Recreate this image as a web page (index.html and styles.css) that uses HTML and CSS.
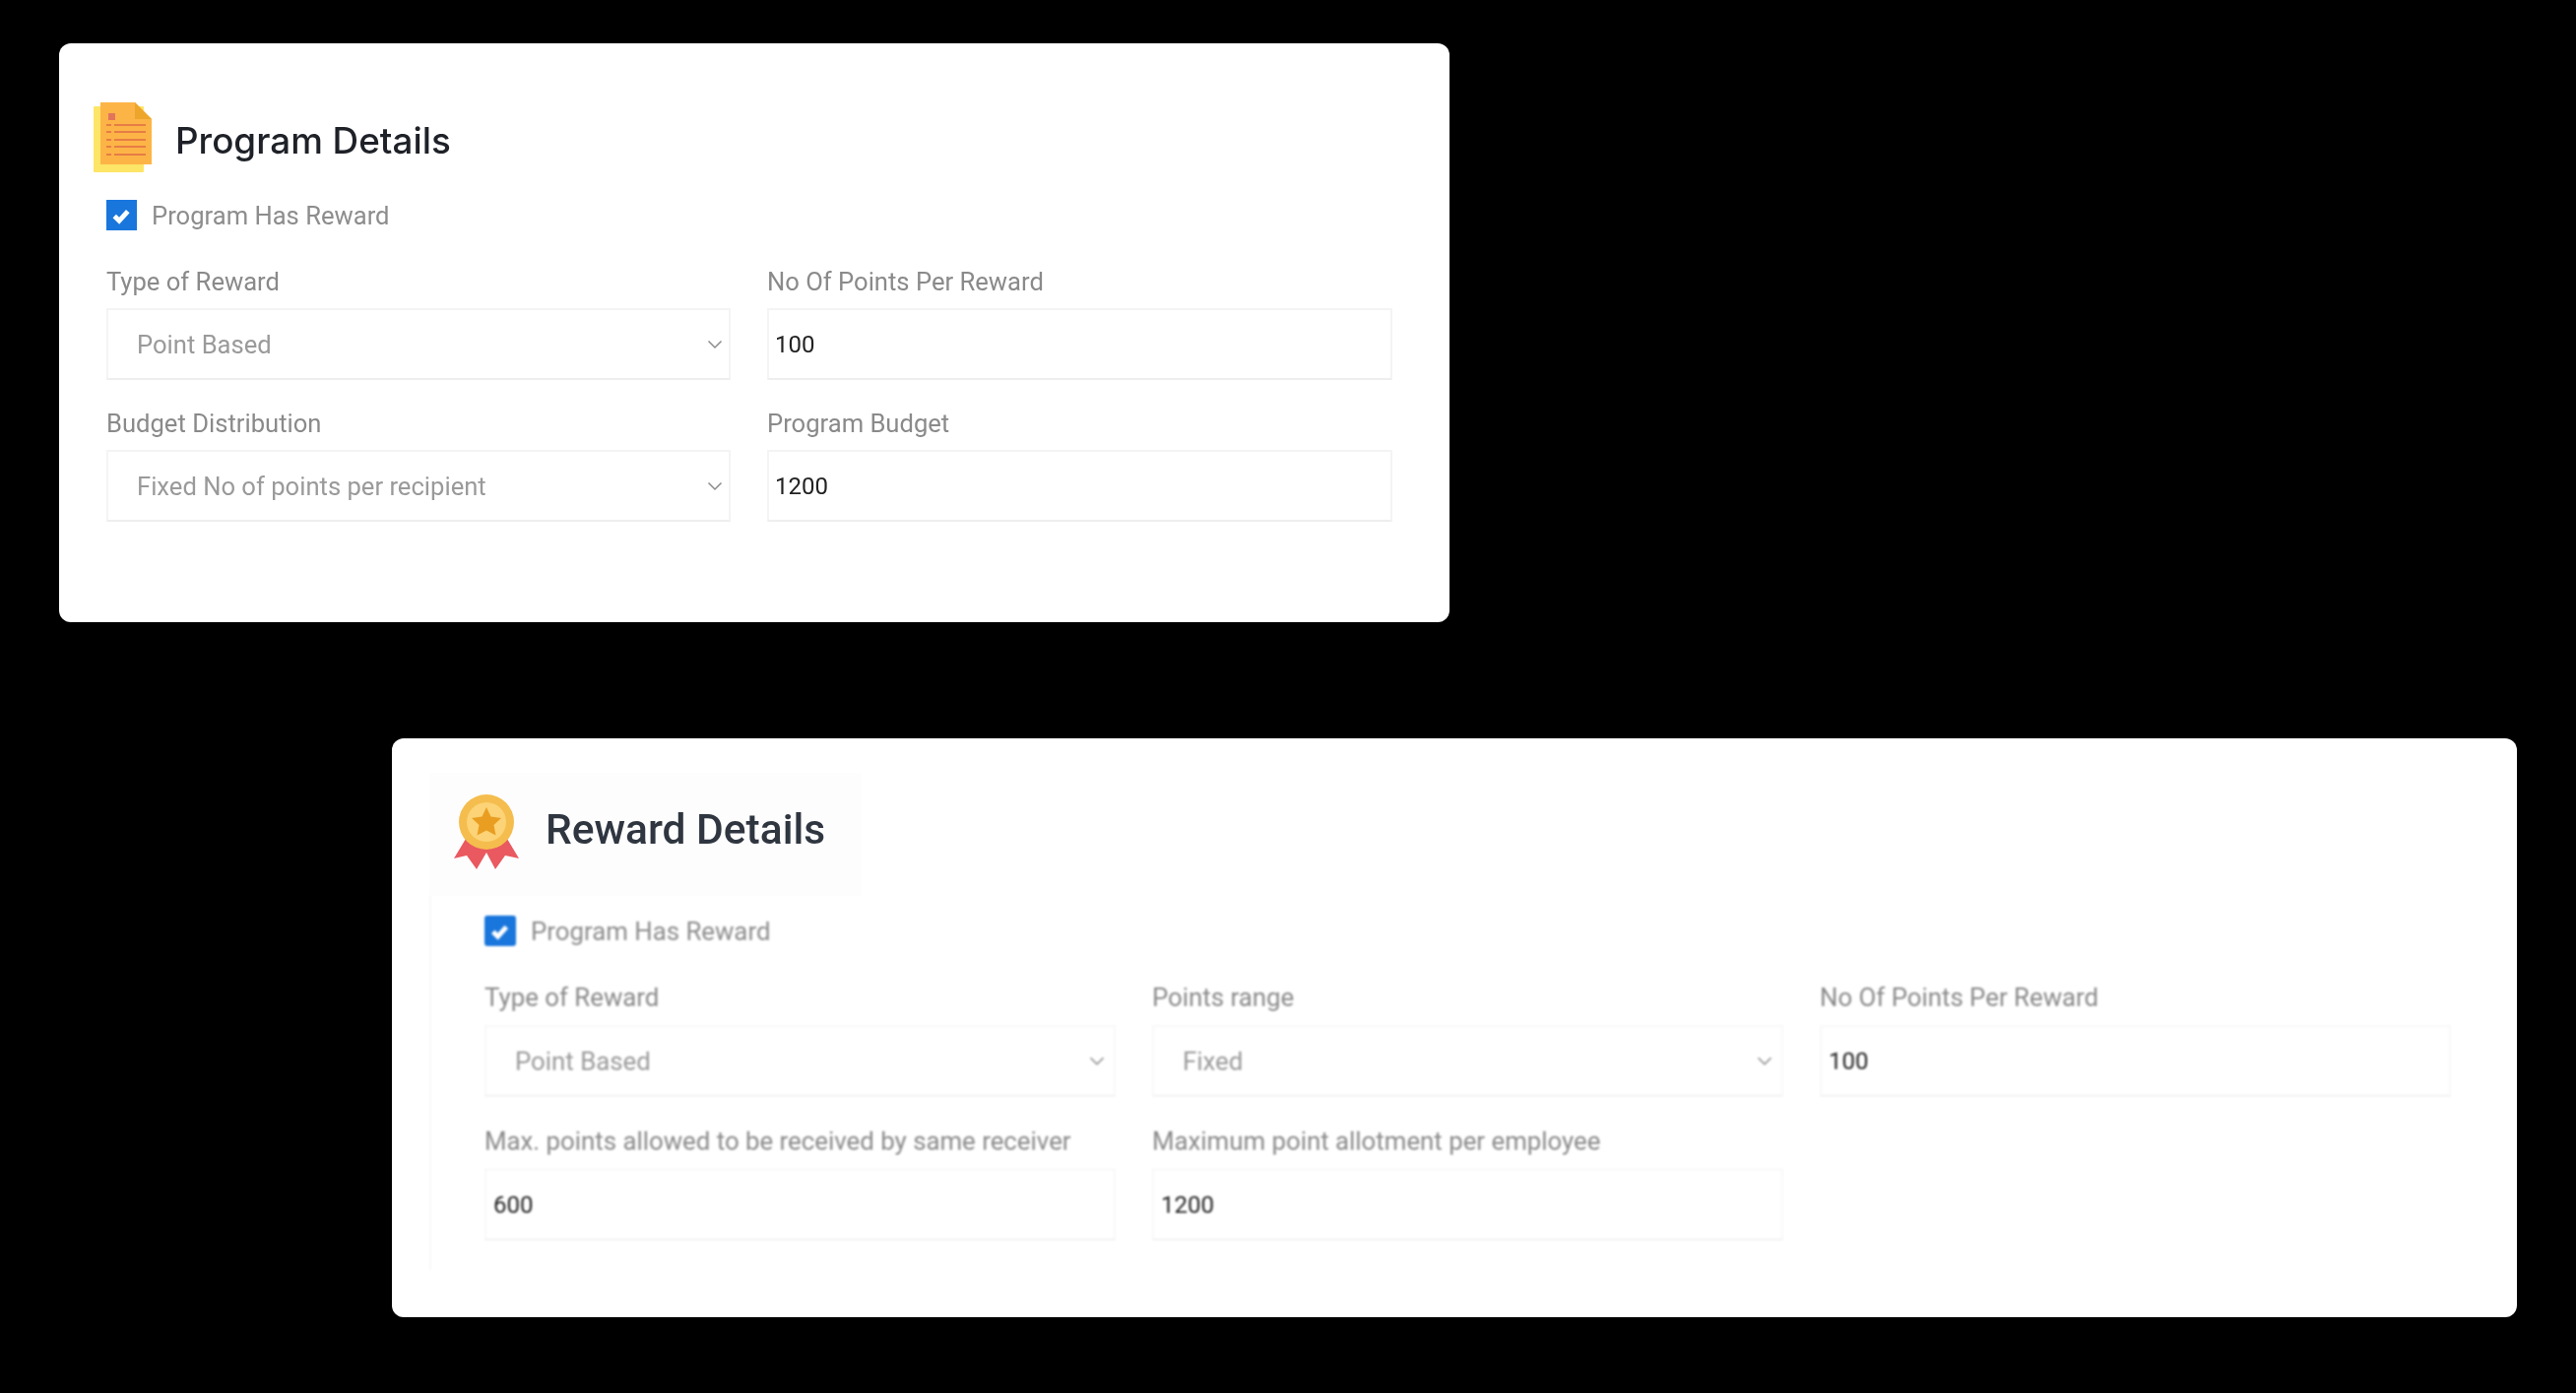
FILE: index.html
```html
<!DOCTYPE html>
<html lang="en">
<head>
<meta charset="utf-8">
<title>Program and Reward Details</title>
<link rel="stylesheet" href="styles.css">
</head>
<body>
<main class="page">
  <section class="card card-program">
    <header class="head head-program">
      <svg class="doc-icon" viewBox="0 0 60 72" aria-hidden="true">
        <rect fill="#fde567" x="0" y="4" width="51" height="67" rx="1"/>
        <path fill="#fdb447" d="M7 0h35l17 17v46H7z"/>
        <path fill="#eda52c" d="M42 0l17 17H42z"/>
        <rect fill="#e2745c" x="15" y="11" width="7" height="7"/>
        <g fill="#e67d45">
          <rect x="13" y="22" width="5" height="2"/><rect x="21" y="22" width="32" height="2"/>
          <rect x="13" y="29" width="5" height="2"/><rect x="21" y="29" width="32" height="2"/>
          <rect x="13" y="37" width="5" height="2"/><rect x="21" y="37" width="32" height="2"/>
          <rect x="13" y="44" width="5" height="2"/><rect x="21" y="44" width="32" height="2"/>
          <rect x="13" y="52" width="5" height="2"/><rect x="21" y="52" width="32" height="2"/>
        </g>
      </svg>
      <h2 class="title title-program">Program Details</h2>
    </header>
    <div class="form form-program">
      <div class="check-row">
        <span class="check">
          <svg viewBox="0 0 32 32" aria-hidden="true"><path d="M8.500 17l5 5 9-10" fill="none" stroke="#fff" stroke-width="5"/></svg>
        </span>
        <span class="check-label">Program Has Reward</span>
      </div>
      <div class="grid grid-two">
        <div class="field">
          <div class="label">Type of Reward</div>
          <div class="control select"><span>Point Based</span><svg class="chev" viewBox="0 0 16 10" aria-hidden="true"><path d="M1.500 1.500L8 8l6.500-6.500" fill="none" stroke="#8b8b8b" stroke-width="1.500"/></svg></div>
        </div>
        <div class="field">
          <div class="label">No Of Points Per Reward</div>
          <div class="control input">100</div>
        </div>
        <div class="field">
          <div class="label">Budget Distribution</div>
          <div class="control select"><span>Fixed No of points per recipient</span><svg class="chev" viewBox="0 0 16 10" aria-hidden="true"><path d="M1.500 1.500L8 8l6.500-6.500" fill="none" stroke="#8b8b8b" stroke-width="1.500"/></svg></div>
        </div>
        <div class="field">
          <div class="label">Program Budget</div>
          <div class="control input">1200</div>
        </div>
      </div>
    </div>
  </section>

  <section class="card card-reward">
    <header class="head head-reward">
      <svg class="medal-icon" viewBox="0 0 66 77" aria-hidden="true">
        <path fill="#e9595f" d="M12 46L0 66l13-3 10 14 10-17 9 17 10-14 14 3-12-20z"/>
        <circle cx="33" cy="29" r="28" fill="#f5bd4d"/>
        <circle cx="33" cy="29" r="20" fill="#fcd376"/>
        <path fill="#e99e22" d="M33 14l4.500 9.500L48 25l-7.500 7 2 10.500-9.500-5-9.500 5 2-10.500L18 25l10.500-1.500z"/>
      </svg>
      <h2 class="title title-reward">Reward Details</h2>
    </header>
    <div class="form form-reward">
      <div class="check-row">
        <span class="check check-round">
          <svg viewBox="0 0 32 32" aria-hidden="true"><path d="M8.500 17l5 5 9-10" fill="none" stroke="#fff" stroke-width="5"/></svg>
        </span>
        <span class="check-label">Program Has Reward</span>
      </div>
      <div class="grid grid-three">
        <div class="field">
          <div class="label">Type of Reward</div>
          <div class="control select"><span>Point Based</span><svg class="chev" viewBox="0 0 16 10" aria-hidden="true"><path d="M1.500 1.500L8 8l6.500-6.500" fill="none" stroke="#8b8b8b" stroke-width="1.500"/></svg></div>
        </div>
        <div class="field">
          <div class="label">Points range</div>
          <div class="control select"><span>Fixed</span><svg class="chev" viewBox="0 0 16 10" aria-hidden="true"><path d="M1.500 1.500L8 8l6.500-6.500" fill="none" stroke="#8b8b8b" stroke-width="1.500"/></svg></div>
        </div>
        <div class="field">
          <div class="label">No Of Points Per Reward</div>
          <div class="control input">100</div>
        </div>
        <div class="field">
          <div class="label">Max. points allowed to be received by same receiver</div>
          <div class="control input">600</div>
        </div>
        <div class="field">
          <div class="label">Maximum point allotment per employee</div>
          <div class="control input">1200</div>
        </div>
      </div>
    </div>
  </section>
</main>
</body>
</html>
```
FILE: styles.css
```css
* { box-sizing: border-box; }
html, body { margin: 0; background: #000; }
.page {
  width: 2616px;
  height: 1415px;
  padding: 44px 0 0 60px;
  display: flex;
  flex-direction: column;
  align-items: flex-start;
  overflow: hidden;
  font-family: Roboto, "Liberation Sans", sans-serif;
}
.card {
  background: #fff;
  border-radius: 12px;
}
.card-program { width: 1412px; height: 588px; padding: 60px 0 0 35px; }
.card-reward  { width: 2158px; height: 588px; margin: 118px 0 0 338px; padding: 35px 0 0 38px; }

.head { display: flex; align-items: center; }
.head-program { height: 72px; gap: 23px; }
.head-reward {
  width: 439px;
  height: 125px;
  padding-left: 25px;
  gap: 27px;
  background: #fdfdfe;
  align-items: flex-start;
}
.doc-icon { width: 60px; height: 72px; flex: none; filter: blur(.4px); }
.medal-icon { width: 66px; height: 77px; flex: none; margin-top: 21px; filter: blur(.4px); }

.title { margin: 0; font-weight: 500; }
.title-program { font-family: Inter, Roboto, sans-serif; font-size: 36.800px; color: #1e2127; margin-top: 5px; filter: blur(.3px); }
.title-reward { font-size: 42.500px; color: #2f3640; margin-top: 33px; filter: blur(.4px); }

.form-program { padding: 27px 0 0 13px; filter: blur(.45px); --field: 25.600px; }
.form-reward {
  height: 380px;
  padding: 20px 0 0 54px;
  border-left: 2px solid #f8f8f8;
  filter: blur(.9px);
  --field: 25.800px;
}

.check-row { display: flex; align-items: center; gap: 15px; }
.check {
  width: 31px;
  height: 31px;
  background: #1976dc;
  display: flex;
}
.check-round { border-radius: 3px; width: 32px; }
.check svg { width: 100%; height: 100%; }
.check-label { font-size: var(--field); color: #8d8d8d; }

.grid { display: grid; margin-top: 37px; }
.grid-two { grid-template-columns: 634px 635px; column-gap: 37px; row-gap: 29px; }
.grid-three { grid-template-columns: 641px 641px 641px; column-gap: 37px; row-gap: 30px; }

.label { font-size: var(--field); line-height: 30px; color: #8a8a8a; margin-bottom: 12px; }
.form-reward .label { margin-bottom: 13px; }
.control {
  height: 73px;
  background: #fff;
  font-size: var(--field);
  display: flex;
  align-items: center;
}
.form-program .control { border: 2px solid #f4f4f4; border-bottom-color: #eeeeee; }
.form-reward .control { border: 2px solid #f8f8f8; border-bottom-color: #f2f2f2; }
.select { color: #9a9a9a; padding: 0 9px 0 29px; justify-content: space-between; }
.form-program .select { padding-right: 6px; }
.input { color: #222; padding-left: 6px; font-size: 24px; }
.form-reward .input { padding-left: 7px; }
.chev { width: 16px; height: 10px; flex: none; }
```
